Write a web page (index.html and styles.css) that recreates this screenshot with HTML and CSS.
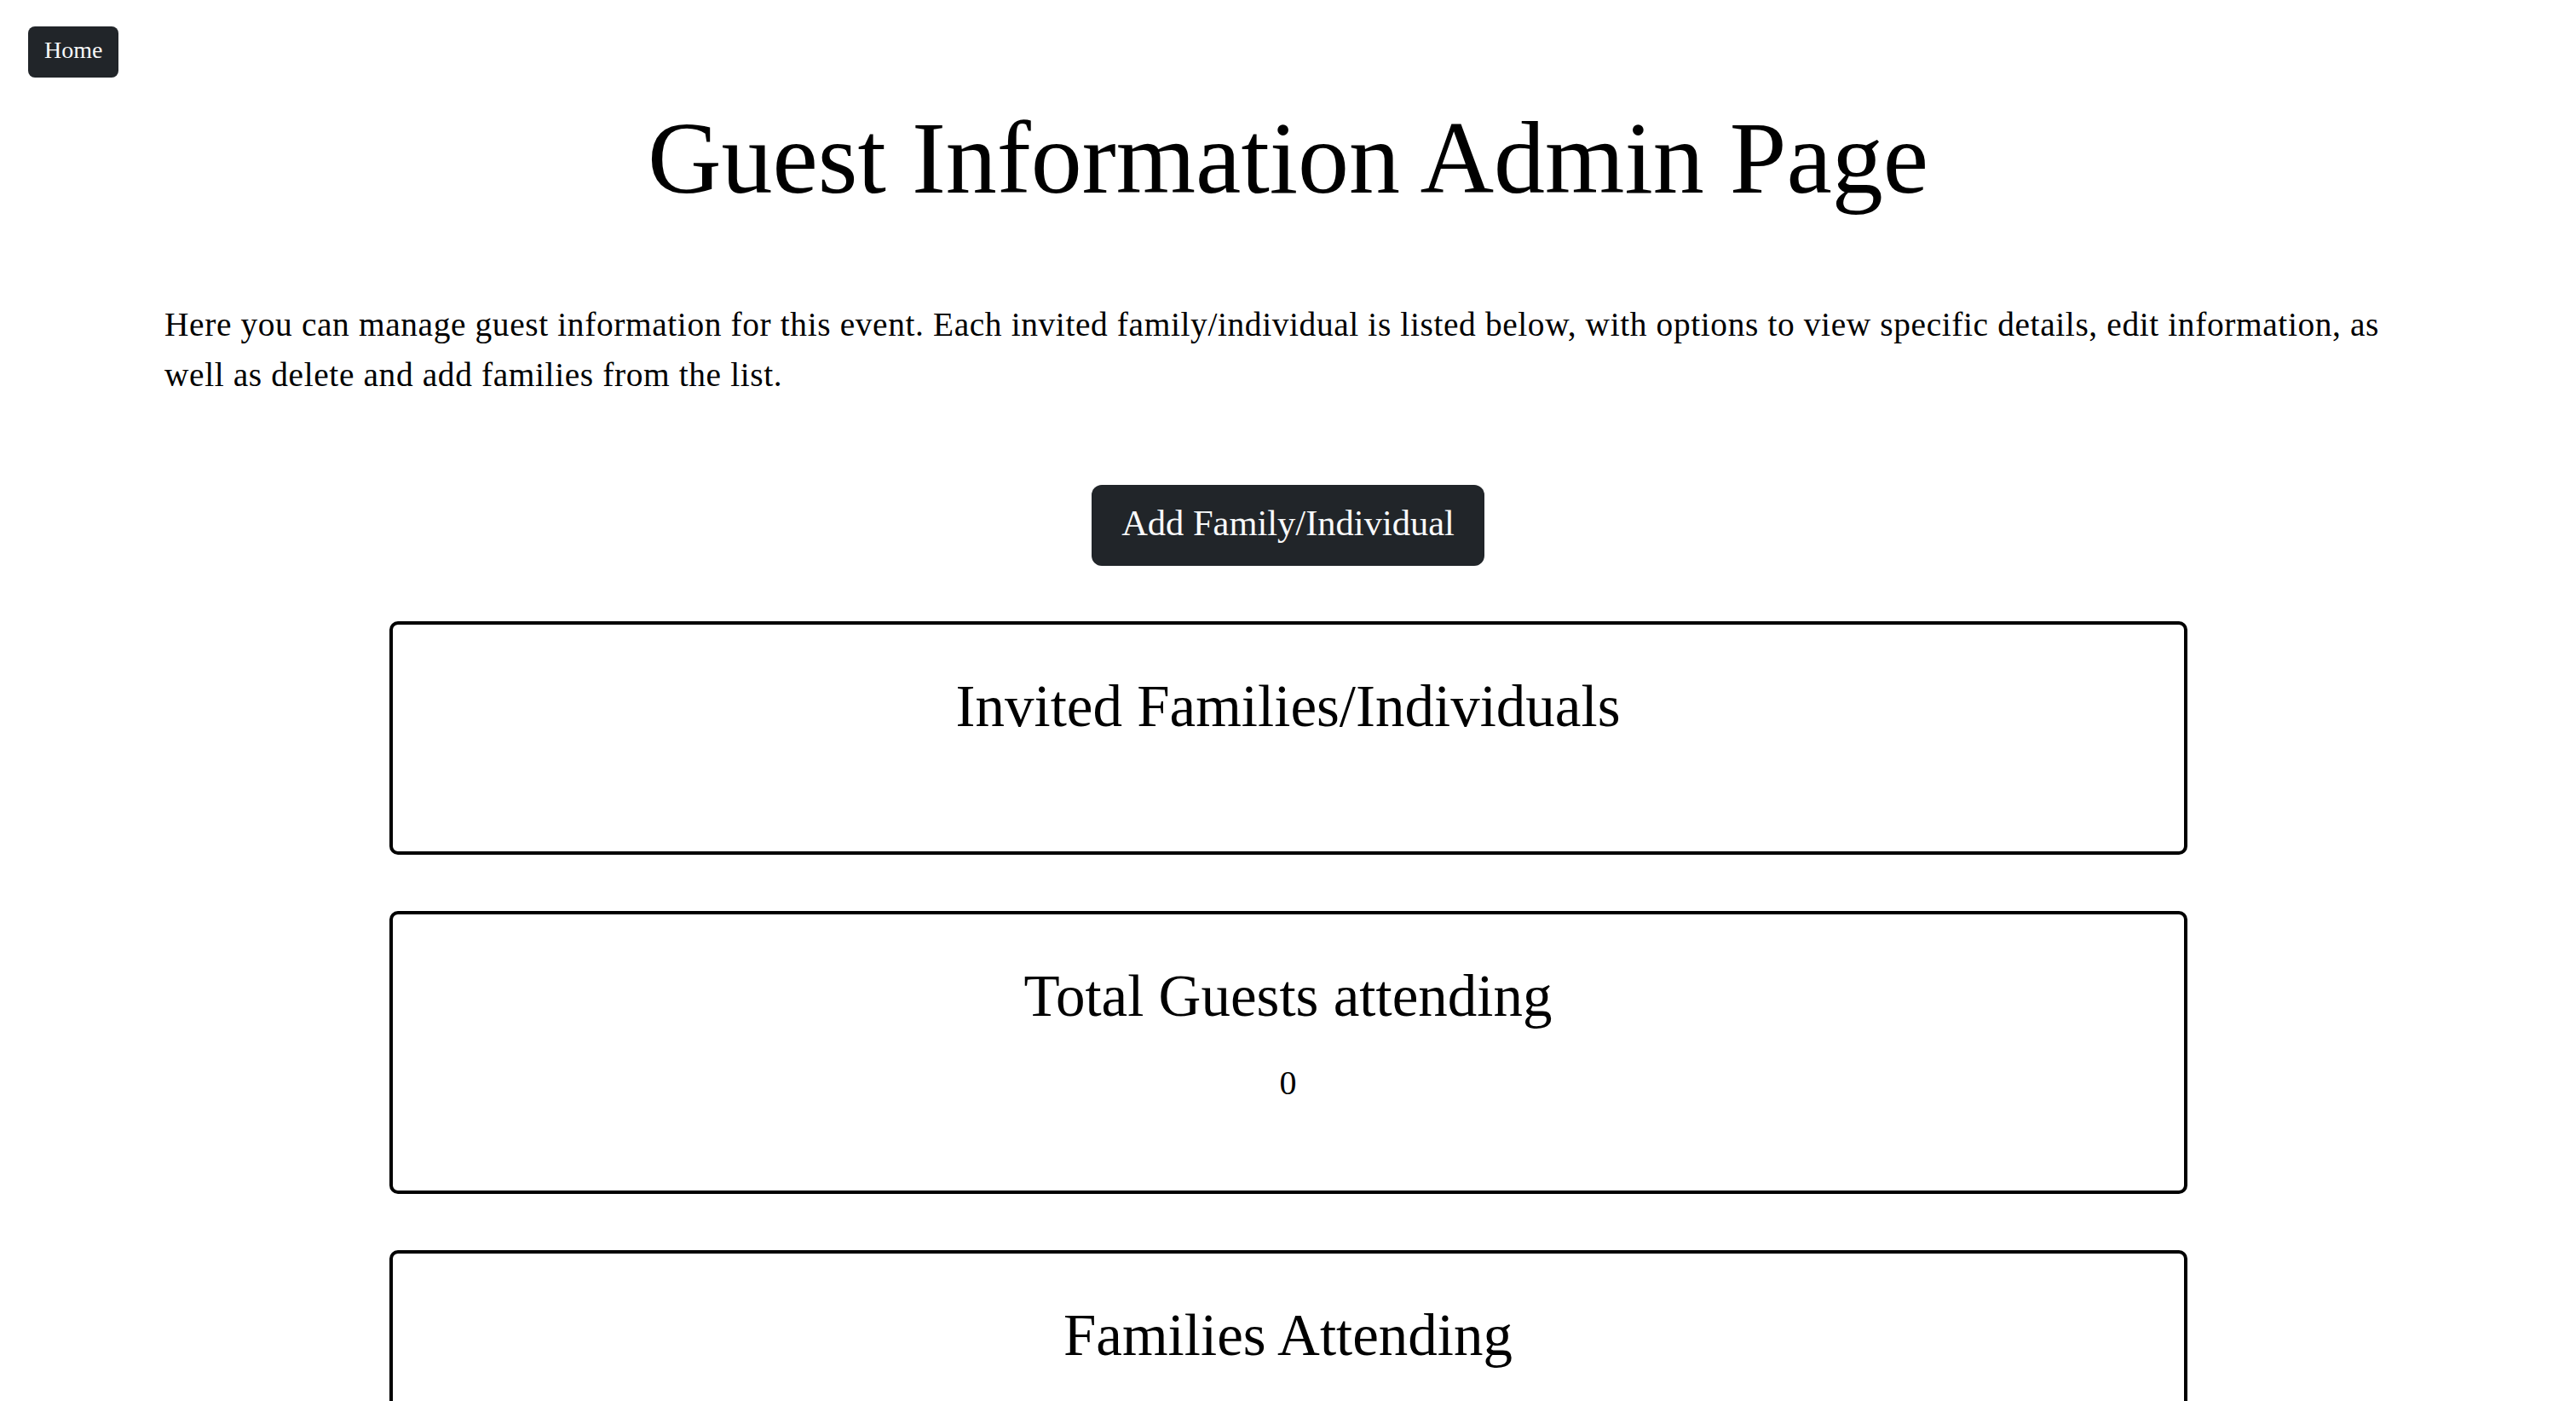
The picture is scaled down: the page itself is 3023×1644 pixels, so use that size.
FILE: index.html
```html
<!DOCTYPE html>
<html lang="en">
<head>
<meta charset="utf-8">
<title>Guest Information Admin Page</title>
<link rel="stylesheet" href="styles.css">
</head>
<body>
  <nav class="topbar">
    <a class="btn btn-home" href="#">Home</a>
  </nav>
  <main class="page">
    <h1 class="page-title">Guest Information Admin Page</h1>
    <p class="intro">Here you can manage guest information for this event. Each invited family/individual is listed below, with options to view specific details, edit information, as well as delete and add families from the list.</p>
    <div class="actions">
      <button class="btn btn-add" type="button">Add Family/Individual</button>
    </div>
    <div class="cards">
      <section class="card">
        <h2 class="card-title">Invited Families/Individuals</h2>
        <div class="card-list"></div>
      </section>
      <section class="card">
        <h2 class="card-title">Total Guests attending</h2>
        <p class="count">0</p>
      </section>
      <section class="card">
        <h2 class="card-title">Families Attending</h2>
        <div class="card-list"></div>
      </section>
    </div>
  </main>
</body>
</html>
```

FILE: styles.css
```css
html, body {
  margin: 0;
  padding: 0;
  background: #ffffff;
}

body {
  font-family: "Liberation Serif", "Times New Roman", serif;
  color: #000000;
}

.topbar {
  padding: 31px 0 0 33px;
  height: 60px;
}

.btn {
  display: inline-block;
  background: #212529;
  color: #f8f9fa;
  border: none;
  text-decoration: none;
  font-family: "Liberation Serif", "Times New Roman", serif;
  font-weight: 400;
  cursor: pointer;
}

.btn-home {
  font-size: 28px;
  line-height: 42px;
  padding: 7px 19px 11px;
  border-radius: 8px;
}

.page {
  display: flex;
  flex-direction: column;
}

.page-title {
  margin: 23px 0 0;
  font-size: 120px;
  line-height: 1.2;
  font-weight: 400;
  text-align: center;
}

.intro {
  margin: 94px 193px 0;
  font-size: 39.4px;
  line-height: 59px;
  letter-spacing: 0.62px;
}

.actions {
  display: flex;
  justify-content: center;
  margin-top: 99px;
}

.btn-add {
  font-size: 42.5px;
  line-height: 63.75px;
  padding: 13px 35px 18px;
  border-radius: 12px;
  color: #f8f9fa;
}

.cards {
  display: flex;
  flex-direction: column;
  align-items: center;
  gap: 66px;
  margin-top: 65px;
  padding-bottom: 60px;
}

.card {
  box-sizing: border-box;
  width: 2110px;
  border: 4px solid #000000;
  border-radius: 10px;
  padding: 55px 0 97px;
  text-align: center;
}

.card-title {
  margin: 0 0 31px;
  font-size: 69px;
  line-height: 1.2;
  font-weight: 400;
}

.count {
  margin: 0;
  font-size: 40px;
  line-height: 59px;
}
```
